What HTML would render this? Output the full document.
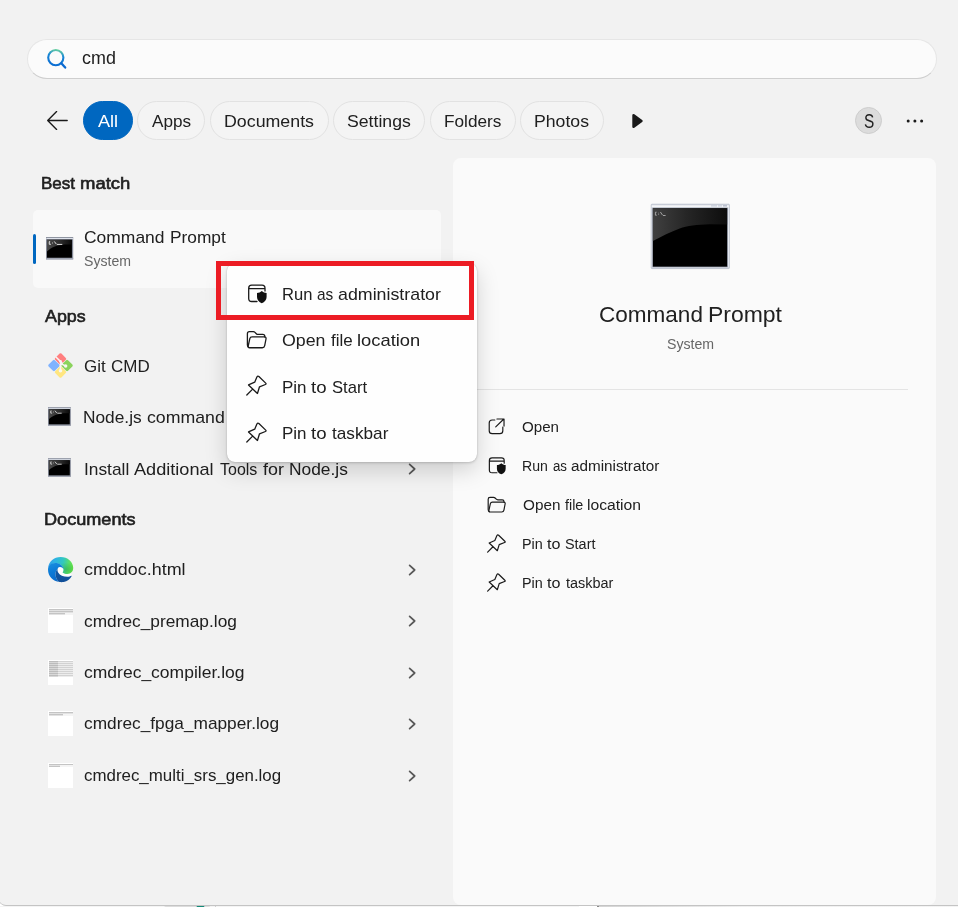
<!DOCTYPE html>
<html>
<head>
<meta charset="utf-8">
<title>Search</title>
<style>
*{box-sizing:border-box;margin:0;padding:0}
html,body{width:958px;height:907px;overflow:hidden;background:#fff}
body{font-family:"Liberation Sans",sans-serif;color:#1a1a1a;position:relative}
.abs{position:absolute}
#win{left:-1px;top:0;width:960px;height:906px;background:#f2f2f2;border-bottom-left-radius:7px;border-bottom:1.5px solid #c4c4c4}
#search{left:27px;top:39px;width:910px;height:40px;border-radius:20px;background:#fbfbfb;border:1px solid #e6e6e6;border-bottom-color:#cfcfcf}
.gl{position:absolute;left:0;top:0;width:958px;height:907px;will-change:transform}
.t{position:absolute;white-space:nowrap;line-height:1;transform-origin:0 0}
.chip{position:absolute;top:101px;height:39px;border-radius:20px;border:1px solid #e2e2e2;background:#f4f4f4}
#right{left:453px;top:158px;width:483px;height:747px;background:#fafafa;border-radius:8px}
#card{left:33px;top:210px;width:408px;height:77.5px;background:#f9f9f9;border-radius:5px}
#bar{left:33px;top:234px;width:3px;height:29.5px;background:#0067c0;border-radius:1.5px}
#menu{left:227px;top:263px;width:249.7px;height:198.6px;background:#fefefe;border-radius:8px;box-shadow:0 8px 22px rgba(0,0,0,.17),0 1px 3px rgba(0,0,0,.16),0 0 1px rgba(0,0,0,.25)}
#red{left:216px;top:261px;width:258px;height:59px;border:5px solid #ec1c24}
#divider{left:470px;top:389px;width:438px;height:1px;background:#e4e4e4}
svg{position:absolute;overflow:visible}
.ic{fill:none;stroke:#1a1a1a;stroke-width:1.3;stroke-linecap:round;stroke-linejoin:round}
</style>
</head>
<body>
<div class="abs" style="left:0;top:906px;width:579px;height:1px;background:#f4f4f4"></div>
<div class="abs" style="left:164px;top:905.6px;width:46px;height:2px;border:1px solid #dcdcdc;border-bottom:0;border-radius:2px 2px 0 0"></div>
<div class="abs" style="left:196px;top:905.4px;width:8.5px;height:4px;background:#138a78;border-radius:4px 4px 0 0"></div>
<div class="abs" style="left:215px;top:905.5px;width:1px;height:2px;background:#d0d0d0"></div>
<div class="abs" style="left:597px;top:905.5px;width:1.5px;height:2px;background:#8a8a8a"></div>
<div class="abs" style="left:598.5px;top:906px;width:360px;height:1px;background:linear-gradient(90deg,#d4d4d4,#efefef 40%,#f4f4f4)"></div>
<div id="win" class="abs"></div>
<div id="search" class="abs"></div>
<div class="chip" style="left:82.5px;width:50.5px;background:#0067c0;border-color:#0067c0"></div>
<div class="chip" style="left:137px;width:68px"></div>
<div class="chip" style="left:210px;width:118.5px"></div>
<div class="chip" style="left:333px;width:92px"></div>
<div class="chip" style="left:430px;width:85.5px"></div>
<div class="chip" style="left:520px;width:83.5px"></div>
<div class="abs" style="left:854.9px;top:106.8px;width:27.3px;height:27.3px;border-radius:50%;background:#dcdcdc;border:1px solid #cdcdcd"></div>
<div id="right" class="abs"></div>
<div id="card" class="abs"></div>
<div id="bar" class="abs"></div>
<div id="divider" class="abs"></div>
<!-- search icon -->
<svg style="left:44px;top:46px" width="26" height="26" viewBox="44 46 26 26">
<defs><linearGradient id="sg" x1="0" y1="0" x2="1" y2="0.15" gradientUnits="objectBoundingBox"><stop offset="0" stop-color="#0a6fd6"/><stop offset="0.55" stop-color="#1487d8"/><stop offset="1" stop-color="#5fd08a"/></linearGradient>
<linearGradient id="sg2" x1="55" y1="66" x2="58" y2="49" gradientUnits="userSpaceOnUse"><stop offset="0" stop-color="#0a6cd2"/><stop offset="0.6" stop-color="#1886d6"/><stop offset="1" stop-color="#6ed69a"/></linearGradient></defs>
<circle cx="55.8" cy="57.6" r="7.6" fill="none" stroke="url(#sg2)" stroke-width="2.1"/>
<path d="M61.3 63.3L65.2 67.6" stroke="#0b6ad0" stroke-width="2.3" stroke-linecap="round" fill="none"/>
</svg>
<!-- back arrow -->
<svg style="left:44px;top:108px" width="28" height="26" viewBox="44 108 28 26"><path d="M67.2 120.5H48M56.6 111.6L47.7 120.5L56.6 129.4" fill="none" stroke="#1a1a1a" stroke-width="1.35" stroke-linecap="round" stroke-linejoin="round"/></svg>
<!-- play -->
<svg style="left:628px;top:111px" width="18" height="20" viewBox="628 111 18 20"><path d="M633.6 115.3L641.4 121L633.6 126.7Z" fill="#1a1a1a" stroke="#1a1a1a" stroke-width="2.6" stroke-linejoin="round"/></svg>
<!-- dots -->
<svg style="left:904px;top:116px" width="22" height="10" viewBox="904 116 22 10"><circle cx="908.2" cy="121" r="1.5" fill="#1a1a1a"/><circle cx="914.9" cy="121" r="1.5" fill="#1a1a1a"/><circle cx="921.6" cy="121" r="1.5" fill="#1a1a1a"/></svg>
<!-- cmd icons small -->
<svg width="0" height="0" style="left:0;top:0">
<defs>
<linearGradient id="gl" x1="0" y1="0" x2="1" y2="0"><stop offset="0" stop-color="#4a4a4a"/><stop offset="0.5" stop-color="#2e2e2e"/><stop offset="1" stop-color="#0a0a0a"/></linearGradient>
<linearGradient id="fr" x1="0" y1="0" x2="0" y2="1"><stop offset="0" stop-color="#8e93a1"/><stop offset="0.08" stop-color="#dfe3ec"/><stop offset="0.14" stop-color="#aab0be"/><stop offset="1" stop-color="#9a9fae"/></linearGradient>
<symbol id="cmds" viewBox="0 0 28 23" overflow="visible">
<rect x="0" y="0" width="27.6" height="22.7" fill="#868b99"/>
<rect x="0.3" y="0.9" width="27" height="1.300" fill="#dfe3ec"/>
<rect x="0" y="21.300" width="27.6" height="1.400" fill="#a0a5b3"/>
<rect x="1" y="2.800" width="25.300" height="18.200" fill="#000"/>
<path d="M1 2.800H26.300V7.600C20 7.300 14 7.600 9 9.600C5.500 11 2.800 12.800 1 14.800Z" fill="url(#gl)"/>
<path d="M4.200 4.700H3.300V7.400H5M6.600 5.300V5.700M6.600 6.700V7.100M8.400 4.500L10.600 7.300M11.200 7.500H16.500" stroke="#f2f2f2" stroke-width="0.900" fill="none"/>
</symbol>
</defs>
</svg>
<svg style="left:45.8px;top:236.9px" width="27.6" height="22.7"><use href="#cmds" width="27.6" height="22.7"/></svg>
<svg style="left:48.3px;top:407.2px" width="23.2" height="19"><use href="#cmds" width="23.2" height="19"/></svg>
<svg style="left:48.3px;top:458.4px" width="23.2" height="19"><use href="#cmds" width="23.2" height="19"/></svg>
<!-- git icon -->
<svg style="left:47px;top:351.8px" width="27" height="27" viewBox="-13.5 -13.5 27 27">
<g transform="rotate(45)">
<rect x="-9.05" y="-9.05" width="8.8" height="8.8" rx="1.3" fill="#ff7f7f"/>
<rect x="0.25" y="-9.05" width="8.8" height="8.8" rx="1.3" fill="#8bd35d"/>
<rect x="-9.05" y="0.25" width="8.8" height="8.8" rx="1.3" fill="#80b3ff"/>
<rect x="0.25" y="0.25" width="8.800" height="8.8" rx="1.3" fill="#ffe680"/>
</g>
<path d="M-4.3 -8.3L1.6 -2.400M0 -4.600V5.200M0.500 -1.800L4.200 0.200" stroke="#f7f5f5" stroke-width="1.500" fill="none" stroke-linecap="round"/>
<circle cx="5.200" cy="0.500" r="1.700" fill="#f7f7f5"/><circle cx="0" cy="5.200" r="1.800" fill="#f8f7f2"/><circle cx="0" cy="-4.200" r="1.300" fill="#f7f5f5"/>
</svg>
<!-- edge icon -->
<svg style="left:47.9px;top:556.8px" width="25.2" height="25.2" viewBox="0 0 256 256">
<defs>
<linearGradient id="e1" x1="0" y1="0.3" x2="1" y2="0.45"><stop offset="0" stop-color="#2f9fec"/><stop offset="0.3" stop-color="#2fb6e0"/><stop offset="0.58" stop-color="#32c7c0"/><stop offset="0.82" stop-color="#58de6c"/><stop offset="1" stop-color="#66e447"/></linearGradient>
<linearGradient id="e2" x1="0" y1="0" x2="0.3" y2="1"><stop offset="0" stop-color="#1a90e0"/><stop offset="0.5" stop-color="#0c7ad6"/><stop offset="1" stop-color="#0a6ccc"/></linearGradient>
<linearGradient id="e3" x1="0" y1="0" x2="0" y2="1"><stop offset="0" stop-color="#0f5aa8"/><stop offset="1" stop-color="#114f98"/></linearGradient>
<radialGradient id="e4" cx="0.72" cy="0.72" r="0.4"><stop offset="0" stop-color="#2aa84a" stop-opacity="0.55"/><stop offset="1" stop-color="#2aa84a" stop-opacity="0"/></radialGradient>
</defs>
<path d="M99 119C99 100 157 92 162 128L200 168L242 172L236 190C228 195 215 200 197 200C155 200 120 185 105 160C96 145 94 130 99 119Z" fill="#fdfdfd"/>
<path d="M2 104C10 48 60 0 128 0C200 0 256 50 256 110C256 150 228 173 197 173C175 173 155 165 148 155C155 148 160 138 157 122C152 96 125 70 98 66C60 60 20 76 2 104Z" fill="url(#e1)"/>
<path d="M2 104C10 48 60 0 128 0C200 0 256 50 256 110C256 150 228 173 197 173C175 173 155 165 148 155C155 148 160 138 157 122C152 96 125 70 98 66C60 60 20 76 2 104Z" fill="url(#e4)"/>
<path d="M0 128C0 100 10 85 30 72C60 55 100 58 125 75C145 88 157 105 157 124C150 108 135 100 120 101C108 102 99 110 99 119C80 135 70 165 80 200C88 225 100 245 117 254C50 250 0 195 0 128Z" fill="url(#e2)"/>
<path d="M99 119C94 130 96 145 105 160C120 185 155 200 197 200C215 200 228 195 236 190C240 188 243 192 240 196C225 225 195 250 160 254C145 256 130 256 117 254C100 245 88 225 80 200C70 165 80 135 99 119Z" fill="url(#e3)"/>
</svg>
<!-- file thumbs -->
<div class="abs" style="left:47.9px;top:608px;width:25.1px;height:24.8px;background:#fff;overflow:hidden"><div style="position:absolute;left:1px;top:1px;width:24px;height:6px;background:repeating-linear-gradient(180deg,#c4c4c4 0,#c4c4c4 1px,#e2e2e2 1px,#e2e2e2 2px)"></div><div style="position:absolute;left:17px;top:5px;width:8px;height:2px;background:#f4f4f4"></div></div>
<div class="abs" style="left:47.9px;top:660px;width:25.1px;height:25px;background:#fff;overflow:hidden"><div style="position:absolute;left:1px;top:1px;width:24px;height:16px;background:repeating-linear-gradient(180deg,#d2d2d2 0,#d2d2d2 1px,#ececec 1px,#ececec 2px)"></div><div style="position:absolute;left:1px;top:1px;width:9.5px;height:16px;background:repeating-linear-gradient(180deg,#bcbcbc 0,#bcbcbc 1px,#d8d8d8 1px,#d8d8d8 2px)"></div></div>
<div class="abs" style="left:47.9px;top:711.3px;width:25.1px;height:24.8px;background:#fff;overflow:hidden"><div style="position:absolute;left:1px;top:1px;width:24px;height:4px;background:repeating-linear-gradient(180deg,#c4c4c4 0,#c4c4c4 1px,#e2e2e2 1px,#e2e2e2 2px)"></div><div style="position:absolute;left:15px;top:3px;width:10px;height:2px;background:#f4f4f4"></div></div>
<div class="abs" style="left:47.9px;top:763.4px;width:25.1px;height:24.8px;background:#fff;overflow:hidden"><div style="position:absolute;left:1px;top:1px;width:24px;height:3px;background:repeating-linear-gradient(180deg,#c4c4c4 0,#c4c4c4 1px,#e2e2e2 1px,#e2e2e2 2px)"></div><div style="position:absolute;left:12px;top:2px;width:13px;height:2px;background:#f4f4f4"></div></div>
<!-- chevrons -->
<svg width="0" height="0" style="left:0;top:0"><defs><symbol id="chev" viewBox="0 0 8 12" overflow="visible"><path d="M1.6 1.3L6.7 6L1.6 10.7" fill="none" stroke="#585858" stroke-width="1.7" stroke-linecap="round" stroke-linejoin="round"/></symbol></defs></svg>
<svg style="left:408px;top:463.4px" width="8" height="12"><use href="#chev" width="8" height="12"/></svg>
<svg style="left:408px;top:563.9px" width="8" height="12"><use href="#chev" width="8" height="12"/></svg>
<svg style="left:408px;top:615.4px" width="8" height="12"><use href="#chev" width="8" height="12"/></svg>
<svg style="left:408px;top:666.9px" width="8" height="12"><use href="#chev" width="8" height="12"/></svg>
<svg style="left:408px;top:718.4px" width="8" height="12"><use href="#chev" width="8" height="12"/></svg>
<svg style="left:408px;top:769.9px" width="8" height="12"><use href="#chev" width="8" height="12"/></svg>
<!-- big cmd icon -->
<svg style="left:651.3px;top:204.1px" width="78.6" height="65" viewBox="0 0 78.6 65">
<defs>
<linearGradient id="bgl" x1="0" y1="0" x2="1" y2="0"><stop offset="0" stop-color="#404040"/><stop offset="0.45" stop-color="#262626"/><stop offset="1" stop-color="#0d0d0d"/></linearGradient>
<linearGradient id="bfr" x1="0" y1="0" x2="0" y2="1"><stop offset="0" stop-color="#cdd1db"/><stop offset="0.03" stop-color="#f8f9fb"/><stop offset="0.06" stop-color="#e6e9ef"/><stop offset="0.5" stop-color="#eff1f5"/><stop offset="0.97" stop-color="#e4e7ee"/><stop offset="1" stop-color="#c3c8d4"/></linearGradient>
</defs>
<rect x="0.2" y="0.2" width="78.2" height="64.4" rx="0.8" fill="url(#bfr)" stroke="#b0b7c6" stroke-width="0.7"/>
<rect x="1.3" y="3.6" width="75.6" height="59.6" fill="#8d93a3"/>
<rect x="1.9" y="4.3" width="74.2" height="58.3" fill="#000"/>
<path d="M1.9 4.3H76.1V20.400L58.700 20.200C46 20.400 36 22 28.700 24.400C20 27.600 10 32.600 1.900 36.900Z" fill="url(#bgl)"/>
<path d="M5.600 8.200H4.400V11.200H5.800M7.600 8.800V9.400M7.600 10.400V11M9.400 8L11.600 11.200M12 11.500H14.600" stroke="#bdbdbd" stroke-width="0.800" fill="none"/>
<rect x="60" y="1" width="6" height="1.600" fill="#cfd4df"/><rect x="67" y="1" width="4" height="1.600" fill="#cfd4df"/><rect x="72" y="1" width="4" height="1.600" fill="#b9bfcd"/>
</svg>
<!-- action icon symbols -->
<svg width="0" height="0" style="left:0;top:0"><defs>
<symbol id="i-open" viewBox="-12 -12 24 24" overflow="visible"><path class="ic" d="M-2.3 -7.580H-5.200Q-8.460 -7.580 -8.460 -4.300V4.100Q-8.460 7.360 -5.200 7.360H3.200Q6.480 7.360 6.480 4.100V0.220M-1.300 0L7.600 -8.700M0 -8.700H7.800V-0.900"/></symbol>
<symbol id="i-admin" viewBox="-12 -12 24 24" overflow="visible"><path class="ic" d="M0 7.500H-5.300Q-8.300 7.500 -8.300 4.500V-5.800Q-8.300 -8.800 -5.300 -8.800H5Q8 -8.800 8 -5.800V-3M-8.300 -5.300H8"/><path d="M4.800 -2.900C3.500 -1.700 1.800 -1 0 -0.900V3C0 6 2 8.100 4.800 9.200C7.600 8.100 9.600 6 9.600 3V-0.900C7.800 -1 6.100 -1.700 4.800 -2.900Z" fill="#111"/></symbol>
<symbol id="i-folder" viewBox="-12 -12 24 24" overflow="visible"><path class="ic" d="M-8.300 7.300Q-9.600 6.800 -9.600 5V-6.300Q-9.600 -8.300 -7.600 -8.300H-3.700Q-2.700 -8.300 -2 -7.600L-0.700 -6.300Q0 -5.600 1 -5.600H5.800Q7.800 -5.600 7.800 -3.600V-3.100"/><path class="ic" d="M-4.900 -3.100H7.300Q9.400 -3.100 9 -1L7.700 5.700Q7.300 7.750 5.300 7.750H-7.500Q-9.200 7.750 -8.800 6L-7.200 -1.400Q-6.800 -3.100 -4.900 -3.100Z"/></symbol>
<symbol id="i-pin" viewBox="-12 -12 24 24" overflow="visible"><path class="ic" d="M1.900 -9.500L8.700 -2.900Q9.700 -1.900 8.400 -1.500L2.500 0.800L0.450 7.500L-8.500 -1.050L-2.300 -3.800L-0.100 -9Q0.700 -10.600 1.900 -9.500ZM-4.350 3.100L-10.200 9"/></symbol>
</defs></svg>
<svg style="left:486.38px;top:415.58px" width="21.84" height="21.84"><use href="#i-open" width="21.84" height="21.84"/></svg>
<svg style="left:486.38px;top:454.58px" width="21.84" height="21.84"><use href="#i-admin" width="21.84" height="21.84"/></svg>
<svg style="left:486.38px;top:493.58px" width="21.84" height="21.84"><use href="#i-folder" width="21.84" height="21.84"/></svg>
<svg style="left:486.38px;top:532.58px" width="21.84" height="21.84"><use href="#i-pin" width="21.84" height="21.84"/></svg>
<svg style="left:486.38px;top:571.58px" width="21.84" height="21.84"><use href="#i-pin" width="21.84" height="21.84"/></svg>

<div class="gl"><span class="t" style="left:81.78px;top:50px;font-size:17.5px;color:#202020;transform:scaleX(1.0247)">cmd</span>
<span class="t" style="left:98.00px;top:113px;font-size:17px;color:#ffffff;transform:scaleX(1.0665)">All</span>
<span class="t" style="left:151.50px;top:113px;font-size:17px;color:#202020;transform:scaleX(1.0092)">Apps</span>
<span class="t" style="left:223.64px;top:113px;font-size:17px;color:#202020;transform:scaleX(1.0466)">Documents</span>
<span class="t" style="left:346.77px;top:113px;font-size:17px;color:#202020;transform:scaleX(1.0395)">Settings</span>
<span class="t" style="left:443.68px;top:113px;font-size:17px;color:#202020;transform:scaleX(1.0130)">Folders</span>
<span class="t" style="left:533.65px;top:113px;font-size:17px;color:#202020;transform:scaleX(1.0387)">Photos</span>
<span class="t" style="left:863.97px;top:111px;font-size:20.5px;color:#202020;transform:scaleX(0.7521)">S</span>
<span class="t" style="left:83.84px;top:253px;font-size:15px;color:#666666;transform:scaleX(0.9399)">System</span>
<span class="t" style="left:45.20px;top:308px;font-size:17px;color:#202020;-webkit-text-stroke:0.6px #202020;transform:scaleX(1.0512)">Apps</span>
<span class="t" style="left:44.42px;top:511px;font-size:17px;color:#202020;-webkit-text-stroke:0.6px #202020;transform:scaleX(1.0645)">Documents</span>
<span class="t" style="left:83.66px;top:561px;font-size:17px;color:#202020;transform:scaleX(1.0541)">cmddoc.html</span>
<span class="t" style="left:83.59px;top:613px;font-size:17px;color:#202020;transform:scaleX(1.0176)">cmdrec_premap.log</span>
<span class="t" style="left:83.58px;top:664px;font-size:17px;color:#202020;transform:scaleX(1.0296)">cmdrec_compiler.log</span>
<span class="t" style="left:83.59px;top:715px;font-size:17px;color:#202020;transform:scaleX(1.0164)">cmdrec_fpga_mapper.log</span>
<span class="t" style="left:83.60px;top:767px;font-size:17px;color:#202020;transform:scaleX(0.9936)">cmdrec_multi_srs_gen.log</span>
<span class="t" style="left:667.33px;top:336px;font-size:15px;color:#666666;transform:scaleX(0.9420)">System</span>
<span class="t" style="left:522.42px;top:419px;font-size:15.5px;color:#202020;transform:scaleX(0.9753)">Open</span>
<span class="t" style="left:41.40px;top:175px;font-size:17px;color:#202020;-webkit-text-stroke:0.6px #202020;transform:scaleX(1.0002)">Best</span>
<span class="t" style="left:79.90px;top:175px;font-size:17px;color:#202020;-webkit-text-stroke:0.6px #202020;transform:scaleX(1.0875)">match</span>
<span class="t" style="left:83.58px;top:229px;font-size:17px;color:#202020;transform:scaleX(1.0266)">Command</span>
<span class="t" style="left:169.98px;top:229px;font-size:17px;color:#202020;transform:scaleX(1.0174)">Prompt</span>
<span class="t" style="left:83.60px;top:358px;font-size:17px;color:#202020;transform:scaleX(0.9952)">Git</span>
<span class="t" style="left:111.00px;top:358px;font-size:17px;color:#202020;transform:scaleX(0.9990)">CMD</span>
<span class="t" style="left:83.38px;top:409px;font-size:17px;color:#202020;transform:scaleX(1.0172)">Node.js</span>
<span class="t" style="left:146.57px;top:409px;font-size:17px;color:#202020;transform:scaleX(1.0427)">command</span>
<span class="t" style="left:83.67px;top:461px;font-size:17px;color:#202020;transform:scaleX(1.0184)">Install</span>
<span class="t" style="left:134.00px;top:461px;font-size:17px;color:#202020;transform:scaleX(1.0667)">Additional</span>
<span class="t" style="left:219.92px;top:461px;font-size:17px;color:#202020;transform:scaleX(0.9411)">Tools</span>
<span class="t" style="left:262.69px;top:461px;font-size:17px;color:#202020;transform:scaleX(1.0528)">for</span>
<span class="t" style="left:289.27px;top:461px;font-size:17px;color:#202020;transform:scaleX(1.0208)">Node.js</span>
<span class="t" style="left:598.50px;top:304px;font-size:22.5px;color:#202020;transform:scaleX(1.0012)">Command</span>
<span class="t" style="left:708.16px;top:304px;font-size:22.5px;color:#202020;transform:scaleX(1.0203)">Prompt</span>
<span class="t" style="left:522.41px;top:458px;font-size:15.5px;color:#202020;transform:scaleX(0.9083)">Run</span>
<span class="t" style="left:552.69px;top:458px;font-size:15.5px;color:#202020;transform:scaleX(0.8541)">as</span>
<span class="t" style="left:570.91px;top:458px;font-size:15.5px;color:#202020;transform:scaleX(0.9851)">administrator</span>
<span class="t" style="left:522.51px;top:497px;font-size:15.5px;color:#202020;transform:scaleX(0.9863)">Open</span>
<span class="t" style="left:564.52px;top:497px;font-size:15.5px;color:#202020;transform:scaleX(0.9214)">file</span>
<span class="t" style="left:586.69px;top:497px;font-size:15.5px;color:#202020;transform:scaleX(1.0116)">location</span>
<span class="t" style="left:522.39px;top:536px;font-size:15.5px;color:#202020;transform:scaleX(0.9269)">Pin</span>
<span class="t" style="left:547.49px;top:536px;font-size:15.5px;color:#202020;transform:scaleX(1.0408)">to</span>
<span class="t" style="left:565.15px;top:536px;font-size:15.5px;color:#202020;transform:scaleX(0.9303)">Start</span>
<span class="t" style="left:522.39px;top:575px;font-size:15.5px;color:#202020;transform:scaleX(0.9269)">Pin</span>
<span class="t" style="left:547.49px;top:575px;font-size:15.5px;color:#202020;transform:scaleX(1.0408)">to</span>
<span class="t" style="left:565.61px;top:575px;font-size:15.5px;color:#202020;transform:scaleX(0.9313)">taskbar</span></div>
<div id="menu" class="abs"></div>
<svg style="left:245.1px;top:281.5px" width="24" height="24"><use href="#i-admin" width="24" height="24"/></svg>
<svg style="left:245.1px;top:328px" width="24" height="24"><use href="#i-folder" width="24" height="24"/></svg>
<svg style="left:245.1px;top:374.2px" width="24" height="24"><use href="#i-pin" width="24" height="24"/></svg>
<svg style="left:245.1px;top:420.7px" width="24" height="24"><use href="#i-pin" width="24" height="24"/></svg>

<div class="gl"><span class="t" style="left:282.03px;top:286px;font-size:17px;color:#202020;transform:scaleX(0.9746)">Run</span>
<span class="t" style="left:317.27px;top:286px;font-size:17px;color:#202020;transform:scaleX(0.9067)">as</span>
<span class="t" style="left:338.47px;top:286px;font-size:17px;color:#202020;transform:scaleX(1.0473)">administrator</span>
<span class="t" style="left:282.16px;top:332px;font-size:17px;color:#202020;transform:scaleX(1.0445)">Open</span>
<span class="t" style="left:330.70px;top:332px;font-size:17px;color:#202020;transform:scaleX(0.9963)">file</span>
<span class="t" style="left:357.01px;top:332px;font-size:17px;color:#202020;transform:scaleX(1.0790)">location</span>
<span class="t" style="left:282.00px;top:379px;font-size:17px;color:#202020;transform:scaleX(0.9993)">Pin</span>
<span class="t" style="left:311.48px;top:379px;font-size:17px;color:#202020;transform:scaleX(1.0958)">to</span>
<span class="t" style="left:332.02px;top:379px;font-size:17px;color:#202020;transform:scaleX(0.9778)">Start</span>
<span class="t" style="left:282.00px;top:425px;font-size:17px;color:#202020;transform:scaleX(0.9993)">Pin</span>
<span class="t" style="left:311.48px;top:425px;font-size:17px;color:#202020;transform:scaleX(1.0958)">to</span>
<span class="t" style="left:331.90px;top:425px;font-size:17px;color:#202020;transform:scaleX(1.0111)">taskbar</span></div>
<div id="red" class="abs"></div>
</body>
</html>
